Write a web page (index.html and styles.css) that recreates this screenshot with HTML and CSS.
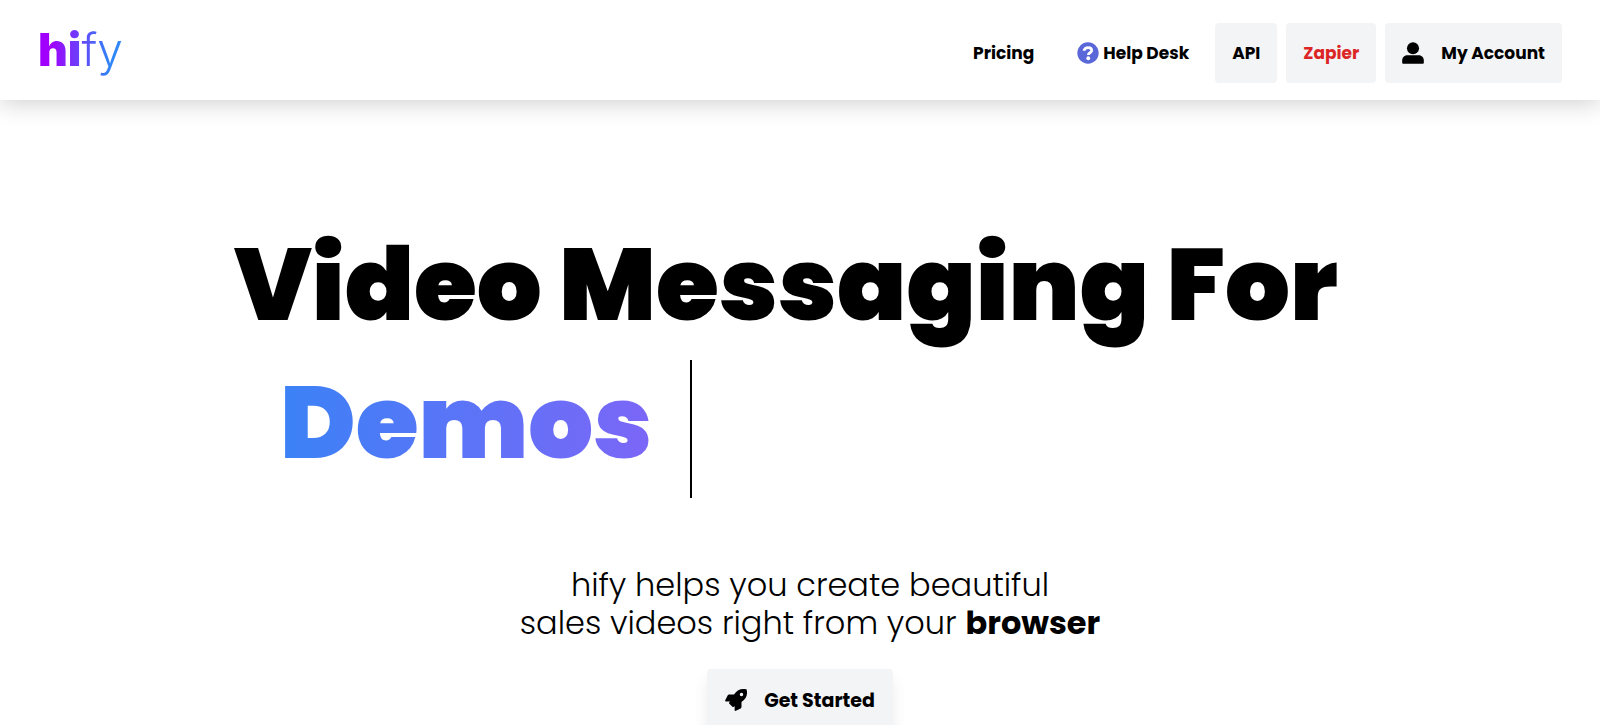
FILE: index.html
```html
<!DOCTYPE html>
<html lang="en">
<head>
  <meta charset="UTF-8">
  <meta name="viewport" content="width=device-width, initial-scale=1.0">
  <title>hify - Video Messaging</title>
  <link rel="stylesheet" href="styles.css">
</head>
<body>
  <header class="header">
    <a href="#" class="logo"><b>hi</b>fy</a>
    <nav class="nav">
      <a href="#" class="nav-link">Pricing</a>
      <a href="#" class="nav-link nav-help">
        <svg class="icon" viewBox="0 0 512 512" aria-hidden="true">
          <circle cx="256" cy="256" r="248" fill="#5a67d8"/>
          <path d="M160 204c14-52 48-76 98-76 48 0 84 28 84 70 0 54-78 50-78 104" fill="none" stroke="#fff" stroke-width="64"/>
          <circle cx="262" cy="378" r="44" fill="#fff"/>
        </svg>
        Help Desk
      </a>
      <a href="#" class="nav-link nav-box">API</a>
      <a href="#" class="nav-link nav-box nav-red">Zapier</a>
      <a href="#" class="nav-link nav-box nav-account">
        <svg class="icon" viewBox="0 0 512 512" aria-hidden="true">
          <circle cx="256" cy="144" r="140"/>
          <path d="M120 308h272c66 0 116 54 116 124v44c0 18-12 30-30 30H34c-18 0-30-12-30-30v-44c0-70 50-124 116-124z"/>
        </svg>
        My Account
      </a>
    </nav>
  </header>

  <main class="hero">
    <h1 class="title">
      Video Messaging For
      <span class="typed"><span class="typed-word">Demos</span></span>
    </h1>
    <p class="subtitle">hify helps you create beautiful<br>sales videos right from your <b>browser</b></p>
    <button type="button" class="start-button">
      <svg class="icon" viewBox="0 0 512 512" aria-hidden="true">
        <path fill-rule="evenodd" d="M505 19c-2-7-6-11-13-12-120-22-203 8-282 122H94c-13 0-27 9-33 20L6 260c-9 18 0 30 16 30h98l-18 18c-10 10-10 24 0 34l70 70c10 10 24 10 34 0l18-18v98c0 16 14 24 30 16l109-55c12-6 21-20 21-33V302c114-80 144-162 121-283zM384 168a40 40 0 1 1 0-80 40 40 0 0 1 0 80z"/>
      </svg>
      Get Started
    </button>
  </main>
</body>
</html>
```

FILE: styles.css
```css
* {
  box-sizing: border-box;
}

body {
  margin: 0;
  font-family: Poppins, Inter, sans-serif;
  background: #fff;
  color: #000;
}

.header {
  display: flex;
  justify-content: space-between;
  align-items: center;
  height: 100px;
  padding: 6px 38px 0;
  background: #fff;
  box-shadow: 0 4px 22px rgba(0, 0, 0, .18);
}

.logo {
  font-family: Inter, sans-serif;
  font-size: 46px;
  font-weight: 300;
  line-height: 60px;
  padding-bottom: 8px;
  text-decoration: none;
  color: transparent;
  background: linear-gradient(to right, #a100ff 15%, #2f86f6 85%);
  -webkit-background-clip: text;
  background-clip: text;
}

.logo b {
  font-weight: 900;
}

.nav {
  display: flex;
  gap: 9px;
}

.nav-link {
  display: flex;
  align-items: center;
  height: 60px;
  padding: 0 17px;
  border-radius: 4px;
  font-size: 17px;
  font-weight: 700;
  color: #000;
  text-decoration: none;
}

.nav-box {
  background: #f3f4f6;
}

.nav-red {
  color: #dc2626;
}

.nav-help {
  gap: 4px;
}

.nav-account {
  gap: 17px;
}

.icon {
  width: 22px;
  height: 22px;
}

.hero {
  display: flex;
  flex-direction: column;
  align-items: center;
  padding: 116px 20px 60px;
}

.title {
  width: 100%;
  max-width: 1132px;
  margin: 0;
  font-size: 102px;
  font-weight: 900;
  line-height: 138px;
}

.typed {
  display: block;
  width: fit-content;
  margin: 6px 0 0 8px;
  padding: 0 38px 12px;
  border-right: 2px solid #000;
  line-height: 126px;
}

.typed-word {
  color: transparent;
  background: linear-gradient(to right, #3b82f6, #7c66f8);
  -webkit-background-clip: text;
  background-clip: text;
}

.subtitle {
  margin: 68px 0 27px;
  padding-left: 20px;
  font-size: 32px;
  font-weight: 300;
  line-height: 38px;
  text-align: center;
}

.subtitle b {
  font-weight: 700;
}

.start-button {
  display: flex;
  align-items: center;
  gap: 17px;
  height: 62px;
  padding: 0 18px;
  border: none;
  border-radius: 4px;
  background: #f3f4f6;
  box-shadow: 0 10px 15px rgba(0, 0, 0, .08);
  font-family: inherit;
  font-size: 19px;
  font-weight: 700;
  color: #000;
  cursor: pointer;
}
```
